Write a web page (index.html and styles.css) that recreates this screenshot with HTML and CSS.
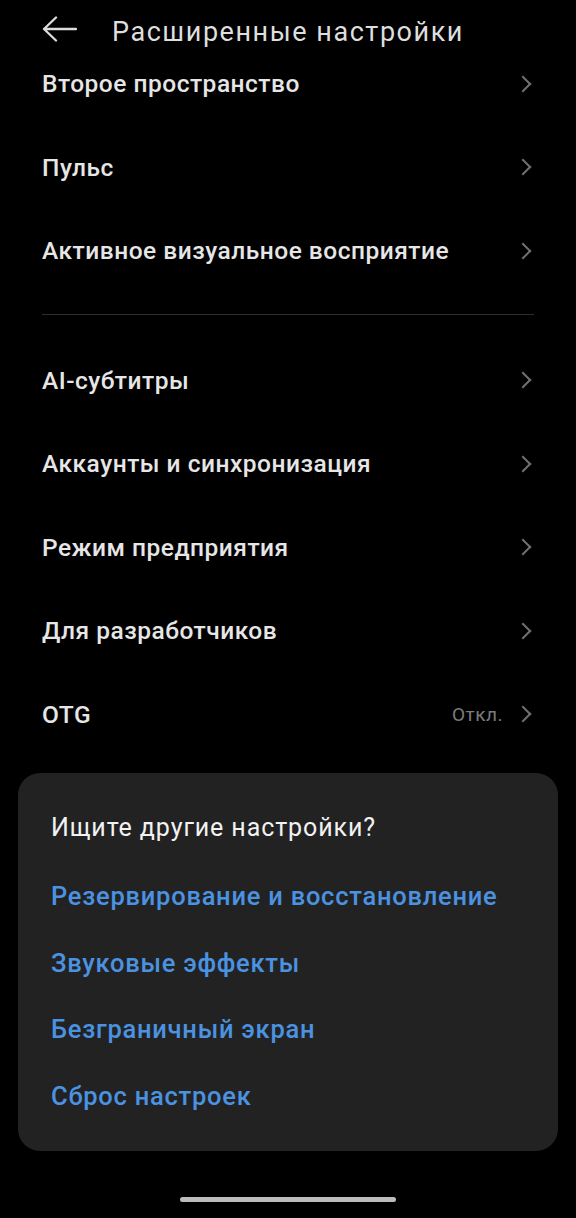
FILE: index.html
```html
<!DOCTYPE html>
<html lang="ru">
<head>
    <meta charset="UTF-8">
    <meta name="viewport" content="width=device-width, initial-scale=1.0">
    <title>Расширенные настройки</title>
    <link rel="stylesheet" href="styles.css">
</head>
<body>
    <header class="topbar">
        <svg class="back" width="35" height="26" viewBox="0 0 35 26">
            <path d="M34 13H2M14 1.5L2 13l12 11.5" fill="none" stroke="#dcdcdc" stroke-width="2.3" stroke-linecap="round" stroke-linejoin="round"/>
        </svg>
        <h1>Расширенные настройки</h1>
    </header>

    <ul class="list">
        <li class="row"><span>Второе пространство</span><i class="chev"></i></li>
        <li class="row"><span>Пульс</span><i class="chev"></i></li>
        <li class="row"><span>Активное визуальное восприятие</span><i class="chev"></i></li>
    </ul>

    <hr class="divider">

    <ul class="list">
        <li class="row"><span>AI-субтитры</span><i class="chev"></i></li>
        <li class="row"><span>Аккаунты и синхронизация</span><i class="chev"></i></li>
        <li class="row"><span>Режим предприятия</span><i class="chev"></i></li>
        <li class="row"><span>Для разработчиков</span><i class="chev"></i></li>
        <li class="row"><span>OTG</span><em class="value">Откл.</em><i class="chev"></i></li>
    </ul>

    <div class="card">
        <p class="card-title">Ищите другие настройки?</p>
        <a class="link">Резервирование и восстановление</a>
        <a class="link">Звуковые эффекты</a>
        <a class="link">Безграничный экран</a>
        <a class="link">Сброс настроек</a>
    </div>

    <div class="home-bar"></div>
</body>
</html>
```

FILE: styles.css
```css
body {
    margin: 0;
    background: #000;
    color: #e6e6e6;
    font-family: Roboto, "Noto Sans", sans-serif;
    width: 576px;
    height: 1218px;
    overflow: hidden;
}
.topbar {
    height: 42px;
    box-sizing: border-box;
    padding: 16px 0 0 42px;
    display: flex;
    align-items: center;
}
.back {
    flex-shrink: 0;
}
.topbar h1 {
    margin: 6px 0 0 35px;
    font-size: 27px;
    line-height: 26px;
    font-weight: 400;
    color: #dedede;
    letter-spacing: 1.55px;
    white-space: nowrap;
}
.list {
    list-style: none;
    margin: 0;
    padding: 0 42px;
}
.row {
    height: 83.5px;
    display: flex;
    align-items: center;
    font-size: 24.5px;
    font-weight: 500;
    letter-spacing: 0.5px;
}
.row span {
    flex: 1;
}
.value {
    font-style: normal;
    font-size: 19px;
    font-weight: 400;
    color: #7c7c7c;
    margin-right: 14px;
}
.chev {
    width: 10px;
    height: 10px;
    border-top: 2px solid #6f6f6f;
    border-right: 2px solid #6f6f6f;
    transform: rotate(45deg);
    margin-right: 5px;
}
.divider {
    border: 0;
    border-top: 1px solid #2e2e2e;
    margin: 21px 42px 24px;
}
.card {
    margin: 17px 18px 0;
    height: 378px;
    box-sizing: border-box;
    background: #222223;
    border-radius: 22px;
    padding: 39px 33px 0;
    display: flex;
    flex-direction: column;
}
.card-title {
    margin: 0 0 36px;
    font-size: 25px;
    letter-spacing: 0.9px;
    color: #f2f2f2;
    line-height: 32px;
}
.link {
    font-size: 25.5px;
    font-weight: 500;
    letter-spacing: 0.75px;
    color: #4b92e0;
    line-height: 32px;
    margin-bottom: 34.7px;
}
.home-bar {
    width: 216px;
    height: 5px;
    border-radius: 3px;
    background: #bcbcbc;
    margin: 46px auto 0;
}
```
